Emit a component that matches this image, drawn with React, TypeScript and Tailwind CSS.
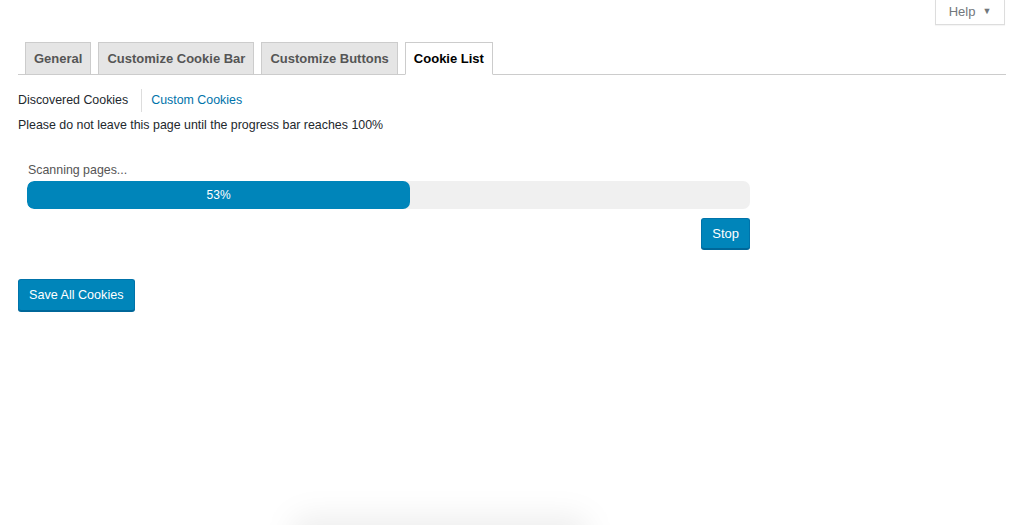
import React from 'react'

const tabs = ['General', 'Customize Cookie Bar', 'Customize Buttons', 'Cookie List']

export default function App() {
  const progress = 53
  return (
    <div className="relative h-[525px] w-full overflow-hidden bg-white font-['Liberation_Sans',Arial,sans-serif] text-[12.4px] text-[#444]">
      {/* help tab */}
      <div className="flex justify-end pr-[19px]">
        <button className="flex h-[25px] w-[70px] items-center justify-center gap-[7px] border border-t-0 border-[#ddd] bg-white text-[13px] text-[#72777c] shadow-[0_1px_1px_rgba(0,0,0,0.04)]">
          Help
          <span className="text-[9px]">▼</span>
        </button>
      </div>

      {/* nav tabs */}
      <div className="mx-[18px] mt-[17px] flex gap-[7px] border-b border-[#ccc] pl-[7px]">
        {tabs.map((t) => {
          const active = t === 'Cookie List'
          return (
            <div
              key={t}
              className={
                active
                  ? '-mb-px flex h-[33px] items-center border border-b-white border-[#ccc] bg-white px-[8px] text-[13px] font-bold text-black'
                  : 'flex h-[32px] items-center border border-b-0 border-[#ccc] bg-[#e5e5e5] px-[8px] text-[13px] font-bold text-[#555]'
              }
            >
              {t}
            </div>
          )
        })}
      </div>

      {/* sub nav */}
      <div className="mx-[18px] mt-[14px] flex h-[23px] items-center">
        <span className="pr-[13px] text-[#23282d]">Discovered Cookies</span>
        <span className="h-full w-px bg-[#ddd]" />
        <span className="pl-[9px] text-[#0073aa]">Custom Cookies</span>
      </div>
      <p className="mx-[18px] mt-[4px] text-[#23282d]">Please do not leave this page until the progress bar reaches 100%</p>

      {/* scanner */}
      <div className="ml-[27px] mt-[26px] w-[723px]">
        <div className="mb-[2px] pl-px text-[#555]">Scanning pages...</div>
        <div className="h-[28px] w-full overflow-hidden rounded-[7px] bg-[#f0f0f0]">
          <div
            className="flex h-full items-center justify-center rounded-[7px] bg-[#0085ba] text-[12px] text-white"
            style={{ width: `${progress}%` }}
          >
            {progress}%
          </div>
        </div>
        <div className="mt-[9px] flex justify-end">
          <button className="h-[31px] rounded-[3px] border border-[#0073aa] border-b-[#006799] bg-[#0085ba] px-[10px] text-[13px] text-white shadow-[0_1px_0_#006799]">
            Stop
          </button>
        </div>
      </div>

      <div className="ml-[18px] mt-[30px]">
        <button className="h-[32px] rounded-[3px] border border-[#0073aa] border-b-[#006799] bg-[#0085ba] px-[10px] text-[12.6px] text-white shadow-[0_1px_0_#006799]">
          Save All Cookies
        </button>
      </div>

      {/* faint shadow at bottom */}
      <div className="absolute left-[290px] top-[515px] h-[40px] w-[300px] rounded-full bg-[#00000010] blur-[14px]" />
    </div>
  )
}
